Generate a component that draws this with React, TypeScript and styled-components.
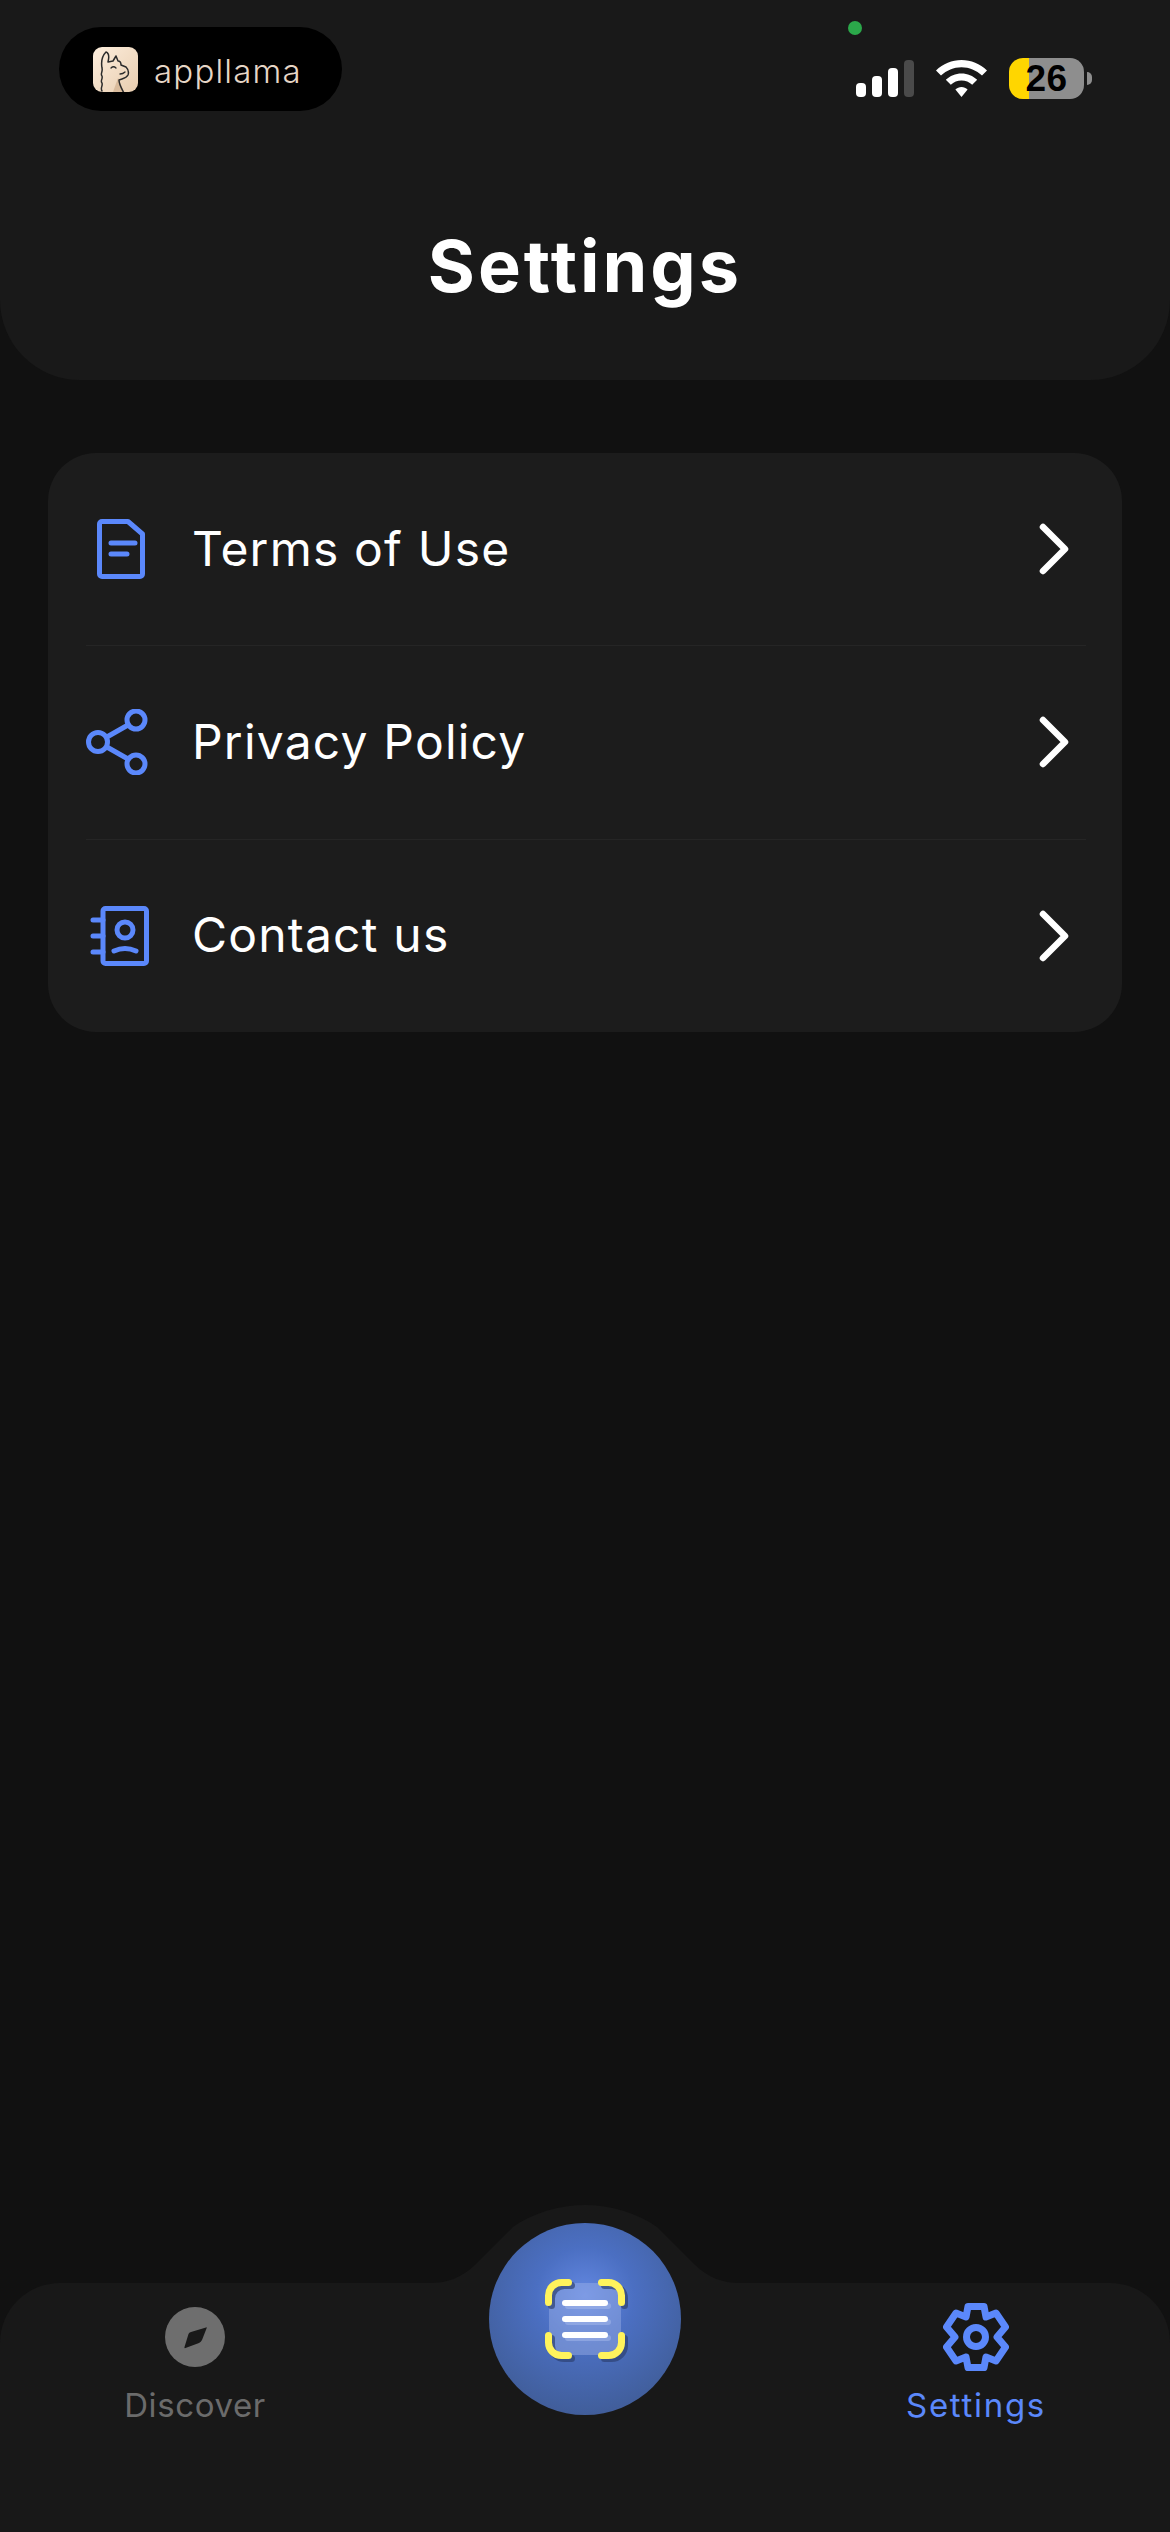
import React from "react";
import styled, { createGlobalStyle } from "styled-components";

const Global = createGlobalStyle`
  html, body { margin: 0; padding: 0; background: #111111; }
  * { box-sizing: border-box; }
`;

const font = `"Inter", "Noto Sans", "Liberation Sans", sans-serif`;

const Screen = styled.div`
  width: 1170px;
  height: 2532px;
  background: #111111;
  display: flex;
  flex-direction: column;
  font-family: ${font};
  overflow: hidden;
`;

const Header = styled.header`
  height: 380px;
  background: #191919;
  border-radius: 0 0 80px 80px;
  display: flex;
  flex-direction: column;
`;

const StatusBar = styled.div`
  height: 112px;
  padding: 27px 86px 0 59px;
  display: flex;
  align-items: flex-start;
  justify-content: space-between;
`;

const BrandPill = styled.div`
  width: 283px;
  height: 84px;
  border-radius: 42px;
  background: #000;
  display: flex;
  align-items: center;
  padding-left: 34px;
  gap: 16px;
`;

const BrandName = styled.span`
  font-family: "Inter", sans-serif;
  font-weight: 300;
  font-size: 33px;
  letter-spacing: 1.2px;
  color: #e6d6c6;
  line-height: 1;
  margin-top: 4px;
`;

const StatusIcons = styled.div`
  position: relative;
  display: flex;
  align-items: flex-end;
  padding-top: 31px;
  gap: 22px;
`;

const CameraDot = styled.span`
  position: absolute;
  left: -8px;
  top: -6px;
  width: 14px;
  height: 14px;
  border-radius: 50%;
  background: #2ba84a;
`;

const Signal = styled.div`
  display: flex;
  align-items: flex-end;
  gap: 6px;
  height: 37px;
`;

const Bar = styled.span<{ $h: number; $dim?: boolean }>`
  width: 10px;
  height: ${(p) => p.$h}px;
  border-radius: 4px;
  background: ${(p) => (p.$dim ? "#4a4a4a" : "#fff")};
`;

const Battery = styled.div`
  position: relative;
  width: 75px;
  height: 41px;
  border-radius: 14px;
  background: linear-gradient(90deg, #ffd600 0 20px, #8e8e8e 20px);
  display: flex;
  align-items: center;
  justify-content: center;
  font-family: "Liberation Sans", sans-serif;
  font-weight: 700;
  font-size: 37px;
  letter-spacing: 0.5px;
  color: #000;
  margin-bottom: -2px;
  &::after {
    content: "";
    position: absolute;
    right: -8px;
    top: 14px;
    width: 5px;
    height: 13px;
    border-radius: 0 6px 6px 0;
    background: #8e8e8e;
  }
`;

const Title = styled.h1`
  margin: 113px 0 0;
  text-align: center;
  font-size: 72px;
  font-weight: 700;
  color: #fff;
  line-height: 82px;
  letter-spacing: 3px;
`;

const Card = styled.section`
  margin: 73px 48px 0;
  background: #1c1c1c;
  border-radius: 48px;
  height: 579px;
  padding: 0 36px 0 38px;
  display: flex;
  flex-direction: column;
`;

const Row = styled.div<{ $last?: boolean }>`
  flex: 1;
  display: flex;
  align-items: center;
  border-bottom: ${(p) => (p.$last ? "none" : "1px solid #252525")};
`;

const RowIcon = styled.div`
  width: 106px;
  flex: none;
  display: flex;
  align-items: center;
`;

const RowLabel = styled.span`
  flex: 1;
  font-size: 48px;
  font-weight: 400;
  color: #fff;
  letter-spacing: 1.2px;
  margin-top: -2px;
`;

const RowChevron = styled.svg`
  margin-right: 16px;
  flex: none;
`;

const Nav = styled.nav`
  position: relative;
  margin-top: auto;
  height: 249px;
  background: #181818;
  border-radius: 60px 60px 0 0;
  display: flex;
  justify-content: space-between;
  padding: 20px 99px 0 100px;
`;

const Bump = styled.svg`
  position: absolute;
  left: 420px;
  top: -78px;
  width: 330px;
  height: 80px;
`;

const Fab = styled.button`
  position: absolute;
  left: 489px;
  top: -60px;
  width: 192px;
  height: 192px;
  border: none;
  padding: 0;
  border-radius: 50%;
  background: radial-gradient(circle at 50% 38%, #6388e2 0%, #4b6fc2 32%, #42609f 72%, #3d5284 100%);
  display: flex;
  align-items: center;
  justify-content: center;
`;

const Tab = styled.div<{ $active?: boolean }>`
  width: 190px;
  display: flex;
  flex-direction: column;
  align-items: center;
  gap: 14px;
  color: ${(p) => (p.$active ? "#5b88fb" : "#6b6b6b")};
  font-size: 33px;
  line-height: 40px;
  letter-spacing: ${(p) => (p.$active ? "1.7px" : "0.6px")};
`;

const TabIcon = styled.div`
  height: 68px;
  display: flex;
  align-items: center;
  justify-content: center;
`;

const blue = "#5b88fb";

const Llama = () => (
  <svg width="45" height="45" viewBox="0 0 45 45">
    <defs>
      <linearGradient id="ll" x1="0" y1="0" x2="1" y2="1">
        <stop offset="0" stopColor="#fdeedd" />
        <stop offset="1" stopColor="#e8cdb0" />
      </linearGradient>
    </defs>
    <rect width="45" height="45" rx="9" fill="url(#ll)" />
    <path d="M25 31L31 45H20Z" fill="#d9bb9c" />
    <path d="M9 44c-2-3 1-5 0-8c-2-2 1-4 0-7c-2-2 1-4 0-8c-1-6 0-12 4-16c3 1 3 6 2 10l5-1l3-5l2 5c2 0 3 2 3 4l5 2c2 2 3 5 2 8c-1 2-3 3-6 4l-3 1c0 5 3 9 6 15" fill="none" stroke="#2b2b2b" strokeWidth="1.5" strokeLinecap="round" strokeLinejoin="round" />
    <path d="M18 21q2.500-2.500 5 0M27 27q3 0 5-2" fill="none" stroke="#2b2b2b" strokeWidth="1.3" strokeLinecap="round" />
  </svg>
);

const Wifi = () => (
  <svg width="51" height="37" viewBox="0 0 51 37">
    <path d="M25.5 0C35 0 44 3.800 51 10.500L46 15.500C40.500 10.300 33.200 7.200 25.500 7.200S10.500 10.300 5 15.500L0 10.500C7 3.800 16 0 25.500 0Z" fill="#fff" />
    <path d="M25.500 13.500C31.500 13.500 37 15.800 41.200 19.800L36.200 24.800C33.300 22.100 29.500 20.600 25.500 20.600S17.700 22.100 14.800 24.800L9.800 19.800C14 15.800 19.500 13.500 25.500 13.500Z" fill="#fff" />
    <path d="M25.500 27C27.800 27 30 27.900 31.600 29.500L25.500 37 19.400 29.500C21 27.900 23.200 27 25.500 27Z" fill="#fff" />
  </svg>
);

const DocIcon = () => (
  <svg width="70" height="60" viewBox="-11 0 70 60" fill="none" stroke={blue} strokeWidth="5" strokeLinecap="round" strokeLinejoin="round">
    <path d="M5 2.500H31L45.500 15V55a2.500 2.500 0 0 1-2.500 2.500H5A2.500 2.500 0 0 1 2.500 55V5A2.500 2.500 0 0 1 5 2.500Z" />
    <path d="M14 24H38M14 35H30" />
  </svg>
);

const ShareIcon = () => (
  <svg width="70" height="66" viewBox="0 0 70 66" fill="none" stroke={blue} strokeWidth="5">
    <circle cx="50" cy="11" r="9" />
    <circle cx="50" cy="55" r="9" />
    <circle cx="12" cy="33" r="9.500" />
    <path d="M20 28.500L42 16M20 37.500L42 50" />
  </svg>
);

const ContactIcon = () => (
  <svg width="70" height="60" viewBox="-5 0 70 60" fill="none" stroke={blue} strokeWidth="5" strokeLinecap="round" strokeLinejoin="round">
    <rect x="12" y="2.500" width="43.500" height="55" rx="2.500" />
    <path d="M2 14H12M2 30H12M2 46H12" />
    <circle cx="34" cy="24" r="8" />
    <path d="M23 45Q34 40 45 45" />
  </svg>
);

const Chevron = () => (
  <RowChevron width="32" height="54" viewBox="0 0 32 54" fill="none" stroke="#fff" strokeWidth="6.500" strokeLinecap="round" strokeLinejoin="round">
    <path d="M5 5L27 27 5 49" />
  </RowChevron>
);

const Compass = () => (
  <svg width="60" height="60" viewBox="0 0 60 60">
    <circle cx="30" cy="30" r="30" fill="#6e6e6e" />
    <path d="M41 20.500Q42 20 41.700 21L37 33Q36 35 34 36L20.500 41Q19 41.500 19.500 40L23.500 27Q24 25.500 26 25Z" fill="#191919" />
  </svg>
);

const Gear = () => (
  <svg width="66" height="68" viewBox="0 0 66 68" fill="none" stroke={blue} strokeWidth="7" strokeLinejoin="round">
    <path d="M25 3.500H41L43 14L53 10L62.500 24L54 34L62.500 44L53 58L43 54L41 64.500H25L23 54L13 58L3.500 44L12 34L3.500 24L13 10L23 14Z" />
    <circle cx="33" cy="34" r="9.500" />
  </svg>
);

const bracketPath =
  "M9.500 29.500V22.500A13 13 0 0 1 22.500 9.500H29.500M62.500 9.500H69.500A13 13 0 0 1 82.500 22.500V29.500M82.500 62.500V69.500A13 13 0 0 1 69.500 82.500H62.500M29.500 82.500H22.500A13 13 0 0 1 9.500 69.500V62.500";
const linesPath = "M26 30H66M26 46H66M26 62H66";

const ScanIcon = () => (
  <svg width="92" height="92" viewBox="0 0 92 92">
    <rect x="10" y="10" width="72" height="72" rx="8" fill="#a3b6ea" opacity="0.42" />
    <g transform="translate(3 3)" fill="none" strokeLinecap="round">
      <path d={bracketPath} stroke="#2d4272" strokeOpacity="0.7" strokeWidth="7" />
      <path d={linesPath} stroke="#a3b6ea" strokeOpacity="0.55" strokeWidth="6" />
    </g>
    <path d={linesPath} stroke="#fff" strokeWidth="6" strokeLinecap="round" fill="none" />
    <path d={bracketPath} stroke="#fff35c" strokeWidth="7" strokeLinecap="round" fill="none" />
  </svg>
);

const rows = [
  { label: "Terms of Use", icon: <DocIcon /> },
  { label: "Privacy Policy", icon: <ShareIcon /> },
  { label: "Contact us", icon: <ContactIcon /> },
];

export default function App() {
  return (
    <Screen>
      <Global />
      <Header>
        <StatusBar>
          <BrandPill>
            <Llama />
            <BrandName>appllama</BrandName>
          </BrandPill>
          <StatusIcons>
            <CameraDot />
            <Signal>
              <Bar $h={14} />
              <Bar $h={21} />
              <Bar $h={29} />
              <Bar $h={37} $dim />
            </Signal>
            <Wifi />
            <Battery>26</Battery>
          </StatusIcons>
        </StatusBar>
        <Title>Settings</Title>
      </Header>
      <Card>
        {rows.map((r, i) => (
          <Row key={r.label} $last={i === rows.length - 1}>
            <RowIcon>{r.icon}</RowIcon>
            <RowLabel>{r.label}</RowLabel>
            <Chevron />
          </Row>
        ))}
      </Card>
      <Nav>
        <Bump viewBox="0 0 330 80">
          <path d="M10 78C35 78 48 67 60 55L93 22C112 8 140 0 165 0C190 0 218 8 237 22L270 55C282 67 295 78 320 78V80H10Z" fill="#181818" />
        </Bump>
        <Tab>
          <TabIcon><Compass /></TabIcon>
          Discover
        </Tab>
        <Fab><ScanIcon /></Fab>
        <Tab $active>
          <TabIcon><Gear /></TabIcon>
          Settings
        </Tab>
      </Nav>
    </Screen>
  );
}
